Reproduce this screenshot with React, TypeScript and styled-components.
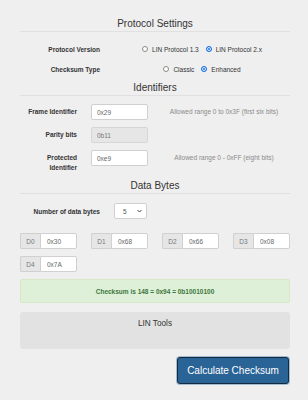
import React, { useState } from "react";
import styled, { createGlobalStyle } from "styled-components";

const GlobalStyle = createGlobalStyle`
  body {
    margin: 0;
    background: #efefef;
    font-family: "Liberation Sans", Arial, sans-serif;
    color: #333;
  }
`;

const Page = styled.div`
  width: 270px;
  margin-left: 20px;
  padding: 18px 0 16px;
`;

const SectionTitle = styled.h3<{ $top?: number }>`
  margin: ${p => p.$top ?? 0}px 0 0;
  padding-bottom: 1px;
  border-bottom: 1px solid #e0e0e0;
  font-size: 10px;
  line-height: 12px;
  font-weight: normal;
  text-align: center;
  color: #333;
`;

const SettingRow = styled.div<{ $top: number }>`
  display: grid;
  grid-template-columns: 94px 1fr;
  align-items: center;
  height: 16px;
  margin-top: ${p => p.$top}px;
`;

const SettingLabel = styled.div`
  text-align: right;
  padding-right: 14px;
  font-size: 6.5px;
  font-weight: bold;
`;

const RadioGroup = styled.div`
  display: flex;
  justify-content: center;
  align-items: center;
  gap: 7px;
`;

const RadioOption = styled.label`
  display: flex;
  align-items: center;
  gap: 4px;
  font-size: 6.5px;
  color: #333;
`;

const Radio = styled.input`
  appearance: none;
  margin: 0;
  width: 6px;
  height: 6px;
  box-sizing: border-box;
  border-radius: 50%;
  border: 1px solid #8a8a8a;
  background: #fff;

  &:checked {
    border-color: #1a73e8;
    background: #1a73e8;
    box-shadow: inset 0 0 0 1px #fff;
  }
`;

const FieldGrid = styled.div`
  display: grid;
  grid-template-columns: 67px 57px 1fr;
  column-gap: 4px;
  row-gap: 7px;
  align-items: start;
  margin-top: 8px;
`;

const FieldLabel = styled.div`
  text-align: right;
  padding: 3px 10px 0 0;
  font-size: 6.5px;
  line-height: 10px;
  font-weight: bold;
`;

const TextInput = styled.input`
  display: block;
  width: 100%;
  height: 16px;
  box-sizing: border-box;
  margin: 0;
  padding: 0 5px;
  border: 1px solid #d0d0d0;
  border-radius: 2px;
  background: #fff;
  font-family: inherit;
  font-size: 6.5px;
  color: #666;
  outline: none;

  &:disabled {
    background: #e6e6e6;
    border-color: #d6d6d6;
    color: #777;
  }
`;

const HelpText = styled.div`
  padding: 3px 0 0 6px;
  font-size: 6.5px;
  line-height: 10px;
  text-align: center;
  color: #8a8a8a;
`;

const SelectRow = styled.div`
  display: grid;
  grid-template-columns: 94px 33px;
  align-items: center;
  margin-top: 9px;
`;

const SelectBox = styled.div`
  position: relative;
  height: 16px;

  svg {
    position: absolute;
    right: 5px;
    top: 6px;
    pointer-events: none;
  }
`;

const Select = styled.select`
  appearance: none;
  display: block;
  width: 100%;
  height: 16px;
  margin: 0;
  padding: 0 0 0 8px;
  box-sizing: border-box;
  border: 1px solid #d0d0d0;
  border-radius: 2px;
  background: #fff;
  font-family: inherit;
  font-size: 6.5px;
  color: #555;
  outline: none;
`;

const ByteGrid = styled.div`
  display: grid;
  grid-template-columns: repeat(4, 57px);
  column-gap: 14px;
  row-gap: 7px;
  margin-top: 14px;
`;

const ByteGroup = styled.div`
  display: flex;
  height: 16px;
`;

const Addon = styled.span`
  display: flex;
  align-items: center;
  justify-content: center;
  width: 20px;
  flex: none;
  box-sizing: border-box;
  border: 1px solid #d0d0d0;
  border-right: none;
  border-radius: 2px 0 0 2px;
  background: #e6e6e6;
  font-size: 6.5px;
  color: #777;
`;

const ByteInput = styled(TextInput)`
  flex: 1;
  min-width: 0;
  border-radius: 0 2px 2px 0;
  padding-left: 6px;
`;

const Alert = styled.div`
  display: flex;
  align-items: center;
  justify-content: center;
  height: 24px;
  margin-top: 7px;
  box-sizing: border-box;
  border: 1px solid #d6e9c6;
  border-radius: 2px;
  background: #dff0d8;
  color: #3c763d;
  font-size: 6.5px;
  font-weight: bold;
`;

const ToolsPanel = styled.div`
  height: 37px;
  margin-top: 9px;
  box-sizing: border-box;
  padding-top: 7px;
  border-radius: 3px;
  background: #e2e2e2;
  text-align: center;
  font-size: 8.2px;
  line-height: 10px;
  color: #333;
`;

const ButtonRow = styled.div`
  display: flex;
  justify-content: flex-end;
  margin-top: 8px;
  padding-right: 1px;
`;

const PrimaryButton = styled.button`
  width: 112px;
  height: 27px;
  margin: 0;
  border: 1px solid #122b40;
  border-radius: 3px;
  box-shadow: 0 0 0 1px #a4bbd0;
  background: #2a6496;
  color: #fff;
  font-family: inherit;
  font-size: 10px;
  cursor: pointer;
`;

const identifierRows = [
  { label: "Frame Identifier", value: "0x29", help: "Allowed range 0 to 0x3F (first six bits)" },
  { label: "Parity bits", value: "0b11", disabled: true },
  { label: "Protected Identifier", value: "0xe9", help: "Allowed range 0 - 0xFF (eight bits)" },
];

const dataBytes = ["0x30", "0x68", "0x66", "0x08", "0x7A"];

export default function App() {
  const [version, setVersion] = useState("2x");
  const [checksumType, setChecksumType] = useState("enhanced");
  const [count, setCount] = useState("5");

  return (
    <>
      <GlobalStyle />
      <Page>
        <SectionTitle>Protocol Settings</SectionTitle>

        <SettingRow $top={9}>
          <SettingLabel>Protocol Version</SettingLabel>
          <RadioGroup>
            <RadioOption>
              <Radio type="radio" name="version" checked={version === "13"} onChange={() => setVersion("13")} />
              LIN Protocol 1.3
            </RadioOption>
            <RadioOption>
              <Radio type="radio" name="version" checked={version === "2x"} onChange={() => setVersion("2x")} />
              LIN Protocol 2.x
            </RadioOption>
          </RadioGroup>
        </SettingRow>

        <SettingRow $top={4}>
          <SettingLabel>Checksum Type</SettingLabel>
          <RadioGroup>
            <RadioOption>
              <Radio type="radio" name="checksum" checked={checksumType === "classic"} onChange={() => setChecksumType("classic")} />
              Classic
            </RadioOption>
            <RadioOption>
              <Radio type="radio" name="checksum" checked={checksumType === "enhanced"} onChange={() => setChecksumType("enhanced")} />
              Enhanced
            </RadioOption>
          </RadioGroup>
        </SettingRow>

        <SectionTitle $top={5}>Identifiers</SectionTitle>

        <FieldGrid>
          {identifierRows.map(row => (
            <React.Fragment key={row.label}>
              <FieldLabel>{row.label}</FieldLabel>
              <TextInput defaultValue={row.value} disabled={row.disabled} />
              <HelpText>{row.help}</HelpText>
            </React.Fragment>
          ))}
        </FieldGrid>

        <SectionTitle $top={7}>Data Bytes</SectionTitle>

        <SelectRow>
          <SettingLabel>Number of data bytes</SettingLabel>
          <SelectBox>
            <Select value={count} onChange={e => setCount(e.target.value)}>
              {[1, 2, 3, 4, 5, 6, 7, 8].map(n => <option key={n}>{n}</option>)}
            </Select>
            <svg width="5" height="4" viewBox="0 0 5 4">
              <path d="M0.5 1 L2.5 3 L4.5 1" fill="none" stroke="#444" strokeWidth="1" />
            </svg>
          </SelectBox>
        </SelectRow>

        <ByteGrid>
          {dataBytes.map((b, i) => (
            <ByteGroup key={i}>
              <Addon>D{i}</Addon>
              <ByteInput defaultValue={b} />
            </ByteGroup>
          ))}
        </ByteGrid>

        <Alert>Checksum is 148 = 0x94 = 0b10010100</Alert>

        <ToolsPanel>LIN Tools</ToolsPanel>

        <ButtonRow>
          <PrimaryButton>Calculate Checksum</PrimaryButton>
        </ButtonRow>
      </Page>
    </>
  );
}
